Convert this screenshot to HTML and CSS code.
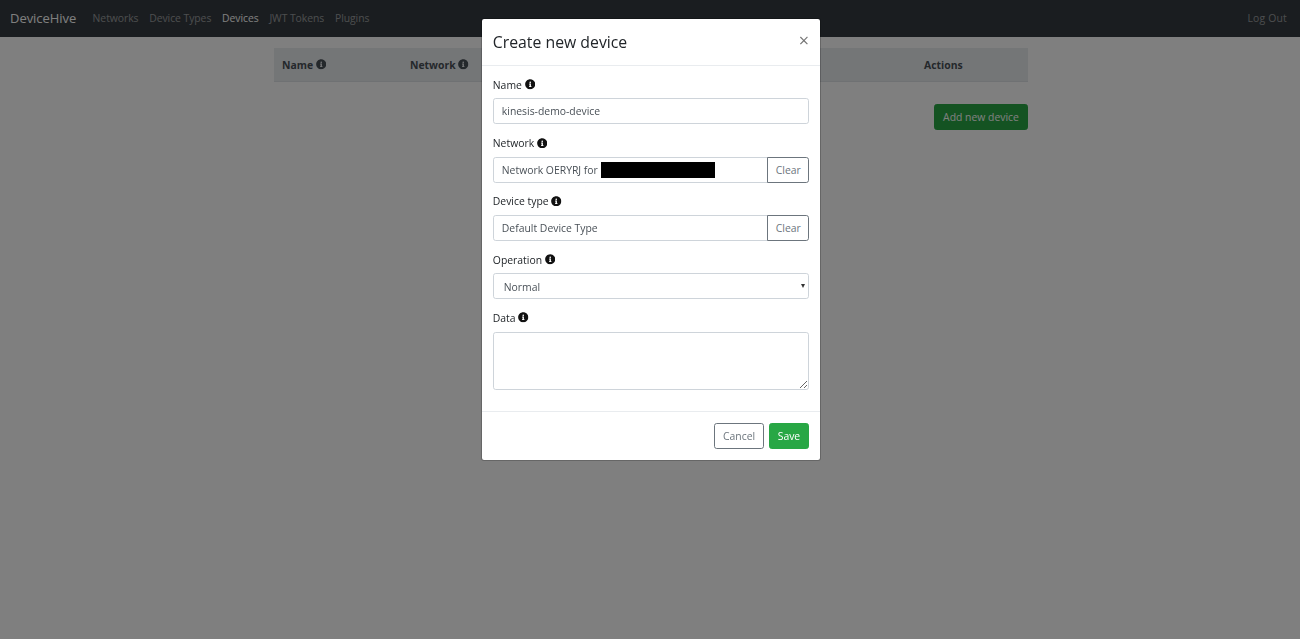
FILE: index.html
```html
<!DOCTYPE html>
<html lang="en">
<head>
<meta charset="utf-8">
<title>DeviceHive</title>
<link rel="stylesheet" href="styles.css">
</head>
<body>
<svg class="sprite" aria-hidden="true"><symbol id="info" viewBox="0 0 512 512"><path d="M256 8C119.043 8 8 119.083 8 256c0 136.997 111.043 248 248 248s248-111.003 248-248C504 119.083 392.957 8 256 8zm0 110c23.196 0 42 18.804 42 42s-18.804 42-42 42-42-18.804-42-42 18.804-42 42-42zm56 254c0 6.627-5.373 12-12 12h-88c-6.627 0-12-5.373-12-12v-24c0-6.627 5.373-12 12-12h12v-64h-12c-6.627 0-12-5.373-12-12v-24c0-6.627 5.373-12 12-12h64c6.627 0 12 5.373 12 12v100h12c6.627 0 12 5.373 12 12v24z"/></symbol></svg>
<nav class="navbar">
  <a class="brand">DeviceHive</a>
  <a class="nav-link">Networks</a>
  <a class="nav-link">Device Types</a>
  <a class="nav-link active">Devices</a>
  <a class="nav-link">JWT Tokens</a>
  <a class="nav-link">Plugins</a>
  <a class="nav-link logout">Log Out</a>
</nav>
<main class="content">
  <div class="table-head">
    <div class="th th-name">Name <svg class="info"><use href="#info"/></svg></div>
    <div class="th th-network">Network <svg class="info"><use href="#info"/></svg></div>
    <div class="th th-type">Device type <svg class="info"><use href="#info"/></svg></div>
    <div class="th th-op">Operation <svg class="info"><use href="#info"/></svg></div>
    <div class="th th-actions">Actions</div>
  </div>
  <div class="add-row"><button class="btn btn-success btn-add">Add new device</button></div>
</main>
<div class="backdrop"></div>
<div class="modal">
  <header class="modal-header">
    <h4 class="modal-title">Create new device</h4>
    <span class="close">×</span>
  </header>
  <div class="modal-body">
    <div class="form-group">
      <label class="label">Name <svg class="info"><use href="#info"/></svg></label>
      <input class="form-control" value="kinesis-demo-device">
    </div>
    <div class="form-group">
      <label class="label">Network <svg class="info"><use href="#info"/></svg></label>
      <div class="input-group">
        <input class="form-control joined" value="Network OERYRJ for">
        <span class="redaction"></span>
        <button class="btn btn-outline btn-clear">Clear</button>
      </div>
    </div>
    <div class="form-group">
      <label class="label">Device type <svg class="info"><use href="#info"/></svg></label>
      <div class="input-group">
        <input class="form-control joined" value="Default Device Type">
        <button class="btn btn-outline btn-clear">Clear</button>
      </div>
    </div>
    <div class="form-group">
      <label class="label">Operation <svg class="info"><use href="#info"/></svg></label>
      <div class="select-wrap">
        <select class="form-control select"><option>Normal</option></select>
        <span class="caret"></span>
      </div>
    </div>
    <div class="form-group">
      <label class="label">Data <svg class="info"><use href="#info"/></svg></label>
      <textarea class="form-control textarea"></textarea>
    </div>
  </div>
  <footer class="modal-footer">
    <button class="btn btn-outline">Cancel</button>
    <button class="btn btn-success">Save</button>
  </footer>
</div>
</body>
</html>
```
FILE: styles.css
```css
* { box-sizing: border-box; }
html, body { margin: 0; height: 100%; }
body {
  background: #fff;
  color: #212529;
  font-family: "Open Sans", "Noto Sans", sans-serif;
  font-size: 10.4px;
  line-height: 16.3px;
  overflow: hidden;
}
.sprite { display: none; }
.info { width: 10.5px; height: 10.5px; vertical-align: -1px; fill: #111; }

.navbar {
  display: flex;
  align-items: center;
  height: 37px;
  padding: 0 7.6px 0 10px;
  background: #343a40;
}
.brand { color: #fff; font-size: 13px; letter-spacing: -.05px; margin-right: 11px; }
.nav-link { color: rgba(255,255,255,.5); padding: 0 5.4px; letter-spacing: -.06px; }
.nav-link.active { color: #fff; }
.logout { margin-left: auto; letter-spacing: .2px; }

.content { width: 754px; margin: 11px 0 0 274px; }
.table-head {
  display: flex;
  align-items: center;
  height: 34px;
  padding-top: 1px;
  background: #e9ecef;
  color: #495057;
  font-weight: 700;
  border-bottom: 1px solid #dee2e6;
}
.th { padding-left: 8px; white-space: nowrap; }
.th-name { width: 128px; }
.th-network { width: 130px; }
.th-type { width: 190px; }
.th-op { width: 194px; }
.th-actions { width: 112px; }
.th .info { fill: #495057; }
.add-row { display: flex; justify-content: flex-end; margin-top: 22px; }

.btn {
  height: 26px;
  padding: 0 7.6px;
  border: 1px solid transparent;
  border-radius: 2.7px;
  background: none;
  font: inherit;
  cursor: pointer;
}
.btn-success { padding: 0 8px; background: #28a745; border-color: #28a745; color: #fff; }
.btn-outline { border-color: #6c757d; color: #6c757d; background: #fff; }
.btn-add { width: 94px; }

.backdrop { position: fixed; inset: 0; background: rgba(0,0,0,.5); }
.modal {
  position: fixed;
  left: 481px;
  top: 18px;
  width: 340px;
  background: #fff;
  border: 1px solid rgba(0,0,0,.2);
  border-radius: 3px;
  background-clip: padding-box;
}
.modal-header {
  display: flex;
  justify-content: space-between;
  align-items: flex-start;
  padding: 10.6px 11px 10.6px 10.8px;
  border-bottom: 1px solid #e9ecef;
}
.modal-title { margin: 0; font-size: 15.8px; line-height: 24.4px; font-weight: 500; color: #212529; }
.close { font-size: 18px; line-height: 20px; font-weight: 400; color: #000; opacity: .55; }
.modal-body { padding: 11.2px 10.8px 10.4px; }
.form-group { margin-bottom: 10.8px; }
.label { display: block; margin-bottom: 5.4px; color: #212529; }
.form-control {
  display: block;
  width: 100%;
  height: 25.8px;
  padding: 0 8px;
  border: 1px solid #ced4da;
  border-radius: 2.7px;
  background: #fff;
  color: #495057;
  font: inherit;
}
.select-wrap { position: relative; }
.select { padding: 1px 10px 0; appearance: none; -webkit-appearance: none; }
.caret {
  position: absolute;
  right: 4px;
  top: 11px;
  border-left: 2px solid transparent;
  border-right: 2px solid transparent;
  border-top: 4px solid #333;
}
.textarea { height: 58px; padding: 4px 8px; resize: vertical; }
.input-group { display: flex; position: relative; }
.joined { flex: 1; min-width: 0; border-radius: 2.7px 0 0 2.7px; }
.btn-clear { width: 42px; height: 25.8px; margin-left: -1px; border-radius: 0 2.7px 2.7px 0; }
.redaction {
  position: absolute;
  left: 108px;
  top: 5px;
  width: 114px;
  height: 16px;
  background: #000;
}
.modal-footer {
  display: flex;
  justify-content: flex-end;
  gap: 5px;
  padding: 11px 10.8px;
  border-top: 1px solid #e9ecef;
}
```
